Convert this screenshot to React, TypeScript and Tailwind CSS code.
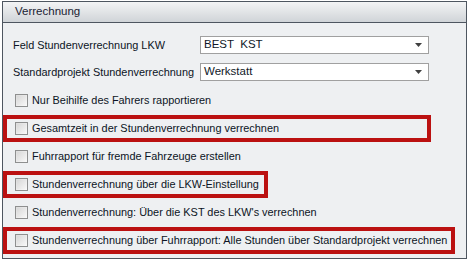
import React from "react";

const font = { fontFamily: "Tahoma, 'Liberation Sans', Arial, sans-serif" };

function Select({ value }: { value: string }) {
  return (
    <div className="w-[229px] h-[18px] border border-[#a0a0a0] bg-white flex items-center pl-[3px] pr-[6px] text-[#101828]">
      <span className="flex-1 whitespace-pre text-[11.5px]">{value}</span>
      <svg width="7" height="4" viewBox="0 0 7 4">
        <path d="M0 0 H7 L3.5 4 Z" fill="#404040" />
      </svg>
    </div>
  );
}

function Box() {
  return (
    <div className="w-[13px] h-[13px] border border-[#8e8f8f] bg-gradient-to-br from-[#dcdcdc] to-[#fafafa] p-[1px] shrink-0">
      <div className="w-full h-full bg-gradient-to-br from-[#d8d8d8] to-[#f6f6f6]" />
    </div>
  );
}

function Row({ text, red, w }: { text: string; red?: boolean; w?: string }) {
  if (red) {
    return (
      <div className="h-[28px] flex items-center">
        <div className={`${w} h-[27px] border-4 border-[#bb1111] flex items-center gap-[4px] pl-[8px]`}>
          <Box />
          <span className="whitespace-nowrap">{text}</span>
        </div>
      </div>
    );
  }
  return (
    <div className="h-[28px] flex items-center gap-[4px] pl-[12px]">
      <Box />
      <span className="whitespace-nowrap">{text}</span>
    </div>
  );
}

export default function App() {
  return (
    <div className="w-[469px] h-[260px] bg-white pt-[1px] pl-[2px]" style={font}>
      <div className="w-[465px] h-[258px] border border-[#4e5660] bg-[#eef0f2] flex flex-col text-[10.9px] text-[#0c1424] overflow-hidden">
        <div className="h-[21px] shrink-0 border-b border-[#4e5660] bg-gradient-to-b from-[#f3f4f5] to-[#d0d4d8] flex items-center pl-[12px] text-[#1a2233] text-[11.5px]">
          Verrechnung
        </div>
        <div className="flex flex-col">
          <div className="mt-[13px] flex items-center pl-[10px] h-[18px]">
            <span className="w-[187px] whitespace-nowrap">Feld Stundenverrechnung LKW</span>
            <Select value="BEST  KST" />
          </div>
          <div className="mt-[9px] flex items-center pl-[10px] h-[18px]">
            <span className="w-[187px] whitespace-nowrap">Standardprojekt Stundenverrechnung</span>
            <Select value="Werkstatt" />
          </div>
          <div className="mt-[5px] flex flex-col">
            <Row text="Nur Beihilfe des Fahrers rapportieren" />
            <Row text="Gesamtzeit in der Stundenverrechnung verrechnen" red w="w-[428px]" />
            <Row text="Fuhrrapport für fremde Fahrzeuge erstellen" />
            <Row text="Stundenverrechnung über die LKW-Einstellung" red w="w-[265px]" />
            <Row text="Stundenverrechnung: Über die KST des LKW's verrechnen" />
            <Row text="Stundenverrechnung über Fuhrrapport: Alle Stunden über Standardprojekt verrechnen" red w="w-[452px]" />
          </div>
        </div>
      </div>
    </div>
  );
}
